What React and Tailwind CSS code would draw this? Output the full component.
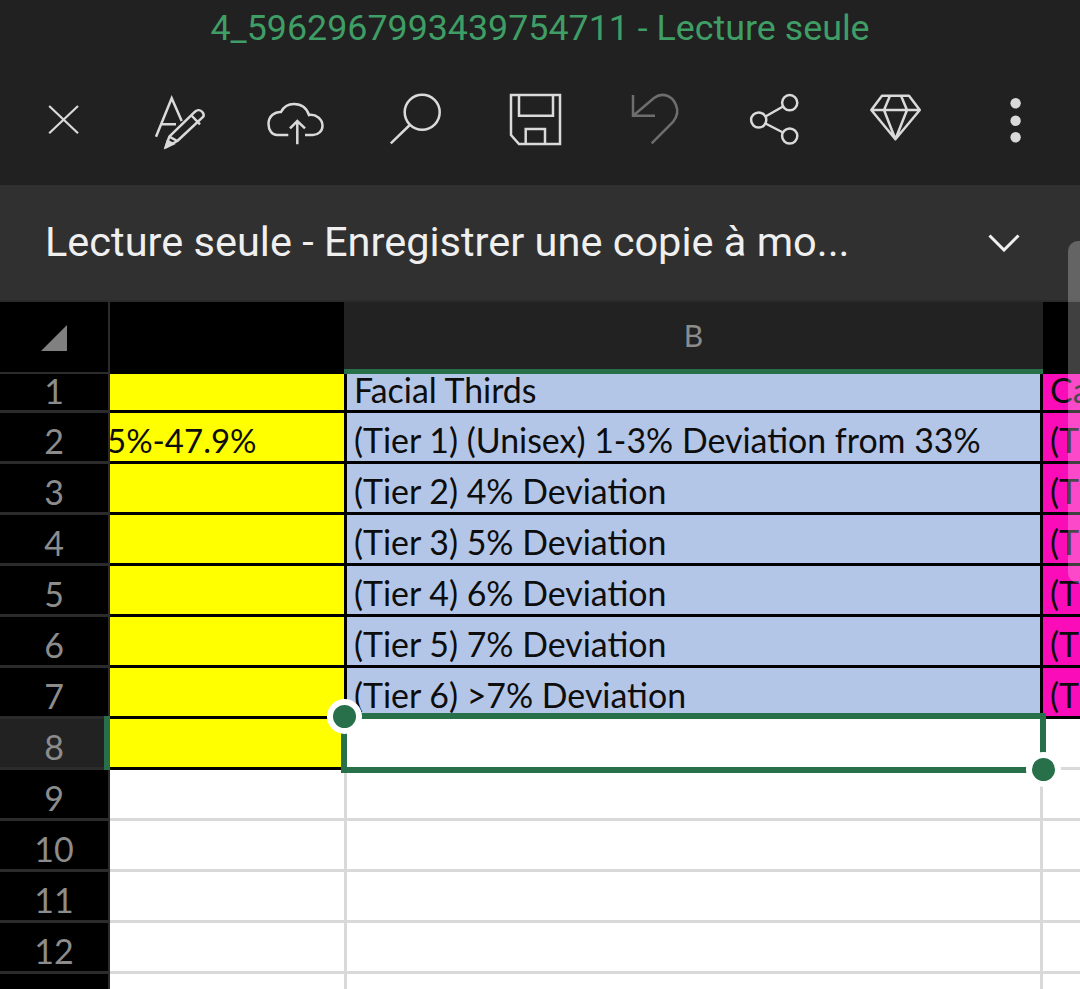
const rows = [
  { n: 1, a: "", b: "Facial Thirds", c: "Ca", h: "h-[39px]", p: "pb-[3px]" },
  { n: 2, a: "5%-47.9%", b: "(Tier 1) (Unisex) 1-3% Deviation from 33%", c: "(T" },
  { n: 3, a: "", b: "(Tier 2) 4% Deviation", c: "(T" },
  { n: 4, a: "", b: "(Tier 3) 5% Deviation", c: "(T" },
  { n: 5, a: "", b: "(Tier 4) 6% Deviation", c: "(T" },
  { n: 6, a: "", b: "(Tier 5) 7% Deviation", c: "(T" },
  { n: 7, a: "", b: "(Tier 6) >7% Deviation", c: "(T" },
];

const Icon = ({ children, color = "#dadada", w = 2.5 }) => (
  <div className="w-[120px] h-[60px] flex justify-center shrink-0">
    <svg width="60" height="60" viewBox="0 0 60 60" fill="none" stroke={color} strokeWidth={w} className="overflow-visible">
      {children}
    </svg>
  </div>
);

const RowHead = ({ n, h = "h-[51px]", p = "pt-[7px]", active }) => (
  <div className={`${h} ${p} w-[110px] shrink-0 relative flex items-center justify-center border-r-2 border-b-[3px] border-[#2b2b2b] text-[#8c8c8c] text-[34px] ${active ? "bg-[#222222]" : "bg-black"}`}>
    {n}
    {active && <div className="absolute right-[-2px] top-[-3px] bottom-[-3px] w-[6px] bg-[#27704a]" />}
  </div>
);

export default function App() {
  return (
    <div className="relative w-[1080px] h-[989px] overflow-hidden bg-black font-['Roboto',sans-serif]">
      <header className="h-[185px] bg-[#212121]">
        <div className="h-[56px] pt-[2px] flex items-center justify-center text-[35.8px] text-[#3f9e66]">
          4_5962967993439754711 - Lecture seule
        </div>
        <div className="mt-[34px] -ml-[4px] flex">
          <Icon w={2.2}><path d="M23.2 16 52 43.3M52 16 23.2 43.3" /></Icon>
          <Icon>
            <path d="M10 46.7 25.7 8.3 35.7 31M14.7 34.3H30" />
            <path d="M19.7 57.3 23.3 46.7 49 21.7C51.5 19.5 54.5 20 56.3 22C58 24 58 25.5 57.3 26.7L31.3 51ZM23.3 46.7 31.3 51M45 25 54 34.3" strokeLinejoin="round" />
            <path d="M19.7 57.3 21.7 51 27 54Z" fill="#dadada" />
          </Icon>
          <Icon>
            <path d="M22.3 45H11C6 45 2.5 40 2.5 34C2.5 26 9 21.5 15 22C18 16 22 14 28 14C36 14 41 19 43 25C50 24 56.5 29 56.5 36C56.5 41 52 45 47 45H39" />
            <path d="M31.3 54.3V31M24 38.3 31.3 31 39 38.3" />
          </Icon>
          <Icon>
            <circle cx="36.2" cy="22.3" r="17.5" />
            <path d="M4.8 53.3 23.8 35" />
          </Icon>
          <Icon>
            <path d="M5 5H54V54H13L5 45Z" />
            <path d="M13 5V25.7H47V5M19.7 54V39H39V54" />
          </Icon>
          <Icon color="#6e6e6e">
            <path d="M7 5V25.7H29M8 25 28 8C36 2 46 5 50 15C52.5 21 51 27 47 32L25.7 53.3" />
          </Icon>
          <Icon>
            <circle cx="43.7" cy="12.7" r="7.6" />
            <circle cx="12.7" cy="30" r="7.6" />
            <circle cx="43.7" cy="46" r="7.6" />
            <path d="M19.5 26.5 37 16.5M19.5 33.5 37 42.5" />
          </Icon>
          <Icon>
            <path d="M16 5.7H43L53.8 20 29.4 49.3 5.3 20ZM5.3 20H53.8M24 5.7 18 20 29.4 49.3 41 20 35 5.7" strokeLinejoin="round" />
          </Icon>
          <Icon>
            <circle cx="29.6" cy="13.3" r="5.2" fill="#dadada" stroke="none" />
            <circle cx="29.6" cy="30.7" r="5.2" fill="#dadada" stroke="none" />
            <circle cx="29.6" cy="47.3" r="5.2" fill="#dadada" stroke="none" />
          </Icon>
        </div>
      </header>

      <div className="h-[115px] bg-[#303030] flex items-center justify-between pl-[45px] pr-[60px]">
        <span className="text-[41.5px] text-[#efefef] whitespace-nowrap">Lecture seule - Enregistrer une copie à mo...</span>
        <svg width="32" height="18" viewBox="0 0 32 18" fill="none" stroke="#f0f0f0" strokeWidth="3">
          <path d="M1.5 1.5 16 16 30.5 1.5" />
        </svg>
      </div>

      <div className="font-['Lato',sans-serif]">
        <div className="h-[74px] flex border-t-2 border-[#2b2b2b]">
          <div className="w-[110px] shrink-0 flex items-center border-r-2 border-b-2 border-[#2b2b2b]">
            <svg width="110" height="72" viewBox="0 0 110 72" className="shrink-0">
              <path d="M41 50H67V24Z" fill="#808080" />
            </svg>
          </div>
          <div className="w-[234px] shrink-0" />
          <div className="w-[699px] shrink-0 bg-[#222222] border-b-[5px] border-[#27704a] flex items-center justify-center text-[#8c8c8c] text-[30px]">B</div>
        </div>

        {rows.map((r) => {
          const h = r.h || "h-[51px]";
          const p = r.p || "pt-[7px]";
          return (
            <div key={r.n} className="flex text-[33.9px] text-[#0d0d0d]">
              <RowHead n={r.n} h={h} p={p} />
              <div className={`${h} ${p} w-[237px] shrink-0 overflow-hidden whitespace-nowrap bg-[#ffff00] border-r-[3px] border-b-[3px] border-black flex items-center`}>
                <span className="-ml-[3px] text-[33px]">{r.a}</span>
              </div>
              <div className={`${h} ${p} w-[696px] shrink-0 bg-[#b4c6e7] border-r-[3px] border-b-[3px] border-black flex items-center pl-[7px]`}>
                {r.b}
              </div>
              <div className={`${h} ${p} flex-1 overflow-hidden whitespace-nowrap bg-[#fa0db9] border-b-[3px] border-black flex items-center pl-[7px]`}>
                {r.c}
              </div>
            </div>
          );
        })}

        <div className="flex">
          <RowHead n={8} active />
          <div className="h-[51px] w-[237px] shrink-0 bg-[#ffff00] border-b-[3px] border-black" />
          <div className="h-[51px] w-[696px] shrink-0 bg-white" />
          <div className="h-[51px] flex-1 bg-white border-b-[3px] border-[#d9d9d9]" />
        </div>

        {[9, 10, 11, 12, 13].map((n) => (
          <div key={n} className="flex">
            <RowHead n={n === 13 ? "" : n} />
            <div className="h-[51px] w-[237px] shrink-0 bg-white border-r-[3px] border-b-[3px] border-[#d9d9d9]" />
            <div className="h-[51px] w-[696px] shrink-0 bg-white border-r-[3px] border-b-[3px] border-[#d9d9d9]" />
            <div className="h-[51px] flex-1 bg-white border-b-[3px] border-[#d9d9d9]" />
          </div>
        ))}
      </div>

      <div className="absolute left-[341px] top-[713px] w-[705px] h-[60px] border-[6px] border-[#27704a]" />
      <div className="absolute left-[327px] top-[699px] w-[35px] h-[35px] rounded-full bg-[#27704a] border-[6px] border-white" />
      <div className="absolute left-[1026px] top-[752px] w-[35px] h-[35px] rounded-full bg-[#27704a] border-[6px] border-white" />

      <div className="absolute left-[1068px] top-[241px] w-[14px] h-[342px] rounded-l-[10px] bg-white/25" />
    </div>
  );
}
